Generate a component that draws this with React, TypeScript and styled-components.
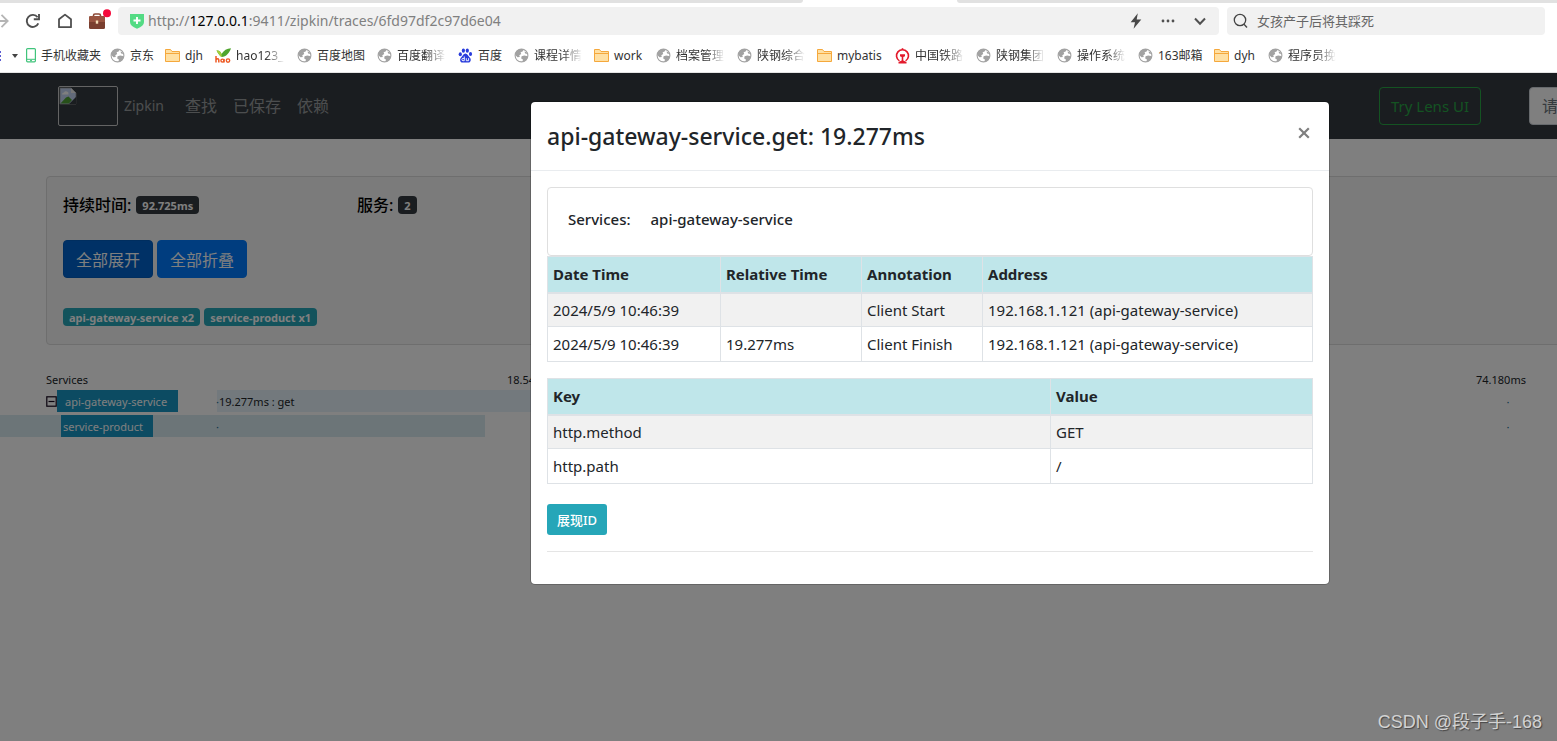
import React from "react";
import styled, { createGlobalStyle, css } from "styled-components";

const latin = `"Noto Sans", "Noto Sans CJK SC", sans-serif`;

const GlobalStyle = createGlobalStyle`
  *, *::before, *::after { box-sizing: border-box; }
  body {
    margin: 0;
    font-family: ${latin};
    font-size: 15px;
    line-height: 24px;
    color: #212529;
    background: #fff;
  }
  button, input { font-family: inherit; }
`;

/* ---------- browser frame ---------- */

const Shell = styled.div`
  display: flex;
  flex-direction: column;
  min-height: 100vh;
  overflow: hidden;
`;

const Browser = styled.header`
  background: #fff;
  border-bottom: 1px solid #e4e4e4;
`;

const TabStrip = styled.div`
  display: flex;
  height: 3px;
  gap: 154px;
`;

const TabEdge = styled.span<{ $grow?: boolean }>`
  width: 803px;
  background: #e1e1e1;
  border-radius: 0 0 3px 0;
  ${(p) =>
    p.$grow &&
    css`
      width: auto;
      flex: 1;
      border-radius: 0 0 0 3px;
    `}
`;

const AddressRow = styled.div`
  display: flex;
  align-items: center;
  padding: 4px 12px 0 0;
`;

const NavTools = styled.div`
  display: flex;
  align-items: center;
  width: 118px;
  height: 28px;
  flex: none;
  gap: 16px;
  overflow: hidden;
`;

const ToolButton = styled.button`
  display: flex;
  flex: none;
  padding: 0;
  border: 0;
  background: none;
  color: #505050;
`;

const ForwardButton = styled(ToolButton)`
  margin-left: -7px;
`;

const Address = styled.div`
  display: flex;
  align-items: center;
  flex: 1;
  height: 28px;
  padding: 0 11px 0 12px;
  border-radius: 4px;
  background: #f1f1f1;
`;

const Url = styled.span`
  flex: 1;
  margin-left: 4px;
  font-size: 14px;
  color: #808080;
  b {
    font-weight: 400;
    color: #000;
  }
`;

const AddressTools = styled.div`
  display: flex;
  align-items: center;
  gap: 16px;
`;

const SearchBox = styled.label`
  display: flex;
  align-items: center;
  gap: 8px;
  width: 318px;
  height: 28px;
  margin-left: 8px;
  padding: 0 6px;
  border-radius: 4px;
  background: #f1f1f1;
`;

const SearchInput = styled.input`
  flex: 1;
  min-width: 0;
  padding: 0;
  border: 0;
  outline: 0;
  background: none;
  font-size: 13px;
  &::placeholder {
    color: #666;
    opacity: 1;
  }
`;

const Bookmarks = styled.nav`
  display: flex;
  align-items: center;
  gap: 12px;
  height: 37px;
  padding-bottom: 2px;
  padding-top: 6px;
  font-size: 12px;
  line-height: 20px;
`;

const BookmarkLead = styled.div`
  display: flex;
  align-items: center;
  gap: 11px;
  width: 18px;
  margin-right: -4px;
`;

const LeadEdge = styled.span`
  width: 1px;
  height: 10px;
  background: repeating-linear-gradient(#5b5bd0 0 2px, #fff 2px 4px);
`;

const Bookmark = styled.a`
  display: flex;
  align-items: center;
  flex: none;
  gap: 5px;
  color: #333;
  text-decoration: none;
`;

const BookmarkText = styled.span<{ $width: number; $fade?: boolean }>`
  width: ${(p) => p.$width}px;
  white-space: nowrap;
  ${(p) =>
    p.$fade &&
    css`
      overflow: hidden;
      mask-image: linear-gradient(to right, #000 60%, transparent);
    `}
`;

/* ---------- page ---------- */

const Page = styled.main`
  position: relative;
  flex: 1;
  overflow: hidden;
  background: #fff;
`;

const Canvas = styled.div`
  width: calc(100% + 303px);
`;

const Navbar = styled.nav`
  display: flex;
  align-items: center;
  height: 66px;
  padding: 0 16px 0 58px;
  background: #343a40;
  font-size: 15px;
`;

const Brand = styled.a`
  display: flex;
  align-items: center;
  gap: 6px;
  width: 127px;
  color: rgba(255, 255, 255, 0.5);
  text-decoration: none;
  font-size: 14px;
`;

const NavLinks = styled.div`
  display: flex;
  flex: 1;
  gap: 16px;
  font-size: 16px;
  a {
    color: rgba(255, 255, 255, 0.5);
    text-decoration: none;
  }
`;

const LensButton = styled.button`
  width: 102px;
  height: 38px;
  padding: 0;
  border: 1px solid #28a745;
  border-radius: 4px;
  background: none;
  color: #28a745;
  font-size: 15px;
`;

const TraceInput = styled.input`
  width: 315px;
  height: 38px;
  margin-left: 48px;
  padding: 0 12px;
  border: 1px solid #ced4da;
  border-radius: 4px;
  font-size: 16px;
  &::placeholder {
    color: #6c757d;
    opacity: 1;
  }
`;

const Summary = styled.section`
  margin: 37px 28px 0 46px;
  height: 169px;
  padding: 16px;
  border: 1px solid #dcdcdc;
  border-radius: 4px;
  background: #f7f7f7;
`;

const Facts = styled.div`
  display: flex;
  font-size: 16px;
  font-weight: 500;
  color: #000;
`;

const Fact = styled.div`
  display: flex;
  align-items: center;
  gap: 5px;
  width: 294px;
`;

const Badge = styled.span<{ $tone: "dark" | "info" }>`
  height: 18px;
  padding: 0 6px;
  border-radius: 4px;
  background: ${(p) => (p.$tone === "dark" ? "#343a40" : "#26a6b8")};
  color: #fff;
  font-size: 11px;
  font-weight: 700;
  line-height: 19px;
  white-space: nowrap;
`;

const ButtonPair = styled.div`
  display: flex;
  gap: 4px;
  margin: 23px 0 30px;
`;

const PrimaryButton = styled.button<{ $active?: boolean }>`
  width: 90px;
  height: 38px;
  padding: 0;
  border: 1px solid ${(p) => (p.$active ? "#005cbf" : "#007bff")};
  border-radius: 4px;
  background: ${(p) => (p.$active ? "#0062cc" : "#007bff")};
  color: #fff;
  font-size: 16px;
`;

const BadgeRow = styled.div`
  display: flex;
  gap: 4px;
`;

const Timeline = styled.section`
  margin-top: 25px;
  font-size: 11px;
  line-height: 24px;
`;

const TickRow = styled.div`
  display: flex;
  height: 20px;
  padding: 0 61px 0 46px;
  line-height: 20px;
`;

const TickTitle = styled.span`
  width: 138px;
`;

const Ticks = styled.div`
  display: grid;
  flex: 1;
  grid-template-columns: repeat(5, 1fr);
`;

const SpanRow = styled.div`
  position: relative;
  display: flex;
  height: 22px;
  margin-bottom: 3px;
  padding: 0 31px 0 46px;
`;

const SpanBar = styled.span`
  position: absolute;
  top: 0;
  bottom: 0;
`;

const SpanName = styled.div`
  position: relative;
  display: flex;
  align-items: center;
  width: 170px;
`;

const Toggle = styled.button`
  display: flex;
  padding: 0;
  border: 0;
  background: none;
`;

const SpanLabel = styled.span<{ $child?: boolean }>`
  height: 22px;
  padding: 0 11px 0 8px;
  background: #1896c4;
  color: #fff;
  ${(p) =>
    p.$child &&
    css`
      margin-left: 15px;
      padding: 0 10px 0 2px;
    `}
`;

const SpanTrack = styled.div`
  position: relative;
  display: grid;
  flex: 1;
  grid-template-columns: repeat(5, 1fr);
  white-space: nowrap;
`;

const Dot = styled.span`
  color: #1f6f96;
`;

/* ---------- modal ---------- */

const Backdrop = styled.div`
  position: absolute;
  inset: 0;
  background: rgba(0, 0, 0, 0.5);
`;

const DialogLayer = styled.div`
  position: absolute;
  top: 28px;
  left: 0;
  width: calc(100% + 303px);
  display: flex;
  justify-content: center;
`;

const Dialog = styled.div`
  width: 800px;
  border: 1px solid rgba(0, 0, 0, 0.2);
  border-radius: 5px;
  background: #fff;
  background-clip: padding-box;
`;

const DialogHeader = styled.div`
  display: flex;
  justify-content: space-between;
  padding: 16px;
  border-bottom: 1px solid #e9ecef;
`;

const DialogTitle = styled.h5`
  margin: 0;
  font-size: 23px;
  font-weight: 500;
  line-height: 36px;
`;

const CloseButton = styled.button`
  display: flex;
  align-items: center;
  justify-content: center;
  width: 18px;
  height: 30px;
  padding: 0;
  border: 0;
  background: none;
`;

const DialogBody = styled.div`
  padding: 16px;
`;

const ServiceCard = styled.div`
  display: flex;
  gap: 20px;
  height: 69px;
  padding: 19px 20px;
  border: 1px solid #dfdfdf;
  border-radius: 4px;
  font-size: 15px;
  font-weight: 500;
`;

const DataTable = styled.table`
  width: 100%;
  margin-bottom: 16px;
  border-collapse: collapse;
  table-layout: fixed;
  border: 1px solid #dee2e6;
  font-size: 15px;
  th,
  td {
    height: 35px;
    padding: 0 5px;
    border: 1px solid #dee2e6;
    text-align: left;
  }
  td {
    height: 34px;
  }
  th {
    height: 36px;
    border-bottom-width: 2px;
    background: #bfe6ea;
    font-weight: 700;
  }
  tbody tr:nth-child(odd) {
    background: #f1f1f1;
  }
  tbody tr:last-child td {
    height: 35px;
  }
`;

const InfoButton = styled.button`
  display: block;
  width: 60px;
  height: 31px;
  margin-top: 20px;
  padding: 0;
  border: 0;
  border-radius: 3px;
  background: #26a6b8;
  color: #fff;
  font-size: 13px;
  font-weight: 500;
`;

const Rule = styled.hr`
  margin: 16px 0;
  border: 0;
  border-top: 1px solid #e5e5e5;
`;

const Watermark = styled.div`
  position: absolute;
  right: 15px;
  bottom: 7px;
  font-family: "Liberation Sans", "Noto Sans CJK SC", sans-serif;
  font-size: 18px;
  color: #d2d2d2;
  text-shadow: 1px 1px 1px #444;
`;

/* ---------- icons ---------- */

const GlobeIcon = () => (
  <svg width="15" height="15" viewBox="0 0 15 15">
    <circle cx="7.5" cy="7.5" r="6.4" fill="#fff" stroke="#a2a2a2" strokeWidth="1.1" />
    <path d="M1.2 7C1.3 3.600 4 1 7.400 1L9.500 1.400 8.600 3.600 6.600 4.300 7.200 6 5.300 7.300 5.800 9 3.500 9.200Z" fill="#a2a2a2" />
    <path d="M7.600 8.200 10.300 7.400 13.900 8.200C13.600 11.200 11.400 13.500 8.500 13.900L8.900 11.600 7.200 10.400Z" fill="#a2a2a2" />
    <path d="M10.500 3.500 12.300 4 13.300 6 11.200 5.400Z" fill="#a2a2a2" />
  </svg>
);

const FolderIcon = () => (
  <svg width="15" height="15" viewBox="0 0 15 15">
    <path d="M.5 13.500V1.500H5.500L7 3.500H14.500V13.500Z" fill="#ffe0a3" stroke="#f5a83c" />
    <path d="M.5 5.500H14.500" stroke="#f5a83c" />
  </svg>
);

const PhoneIcon = () => (
  <svg width="10" height="15" viewBox="0 0 10 15">
    <rect x=".6" y=".6" width="8.800" height="13.200" rx="1" fill="#fff" stroke="#40c47b" strokeWidth="1.200" />
    <path d="M1 11.300H9M4 12.600H6" stroke="#40c47b" />
  </svg>
);

const HaoIcon = () => (
  <svg width="16" height="15" viewBox="0 0 16 15">
    <path d="M1.500 2.500C4 2 6 4 6.500 6 8.500 2.500 12 .3 16 .2 14.500 5 11 8.700 6.800 8.900 5 8.500 3.500 6 1.500 2.500Z" fill="#4ea52e" />
    <path d="M1.500 2.500C4 2 6 4 6.500 6L6.800 8.900C5 8.500 3.500 6 1.500 2.500Z" fill="#a5cf3b" />
    <path d="M1 8V14.500M1 11.700Q3.400 9.800 3.800 12V14.500M9 11V14.500" fill="none" stroke="#ee5a24" strokeWidth="1.500" />
    <circle cx="7.400" cy="12.600" r="1.500" fill="none" stroke="#ee5a24" strokeWidth="1.400" />
    <circle cx="13" cy="12.600" r="1.700" fill="none" stroke="#ee5a24" strokeWidth="1.400" />
  </svg>
);

const PawIcon = () => (
  <svg width="15" height="15" viewBox="0 0 15 15" fill="#2a3ddc">
    <ellipse cx="2.300" cy="6.200" rx="1.600" ry="2" />
    <ellipse cx="5.400" cy="2.600" rx="1.600" ry="2.200" />
    <ellipse cx="9.300" cy="2.600" rx="1.600" ry="2.200" />
    <ellipse cx="12.500" cy="6" rx="1.600" ry="2" />
    <path d="M7.400 5.600C9.400 5.600 10 8 11.500 9.200 13.600 11 13 14.500 10.300 14.500H4.500C1.800 14.500 1.400 11 3.400 9.200 4.900 8 5.400 5.600 7.400 5.600Z" />
    <path d="M6.300 8.500V12.700H5Q3.800 12.700 3.900 11.500T5 10.400H6.300M8.300 10.200V12.700H10.600V10.200" fill="none" stroke="#fff" strokeWidth=".9" />
  </svg>
);

const RailIcon = () => (
  <svg width="15" height="16" viewBox="0 0 15 16">
    <path d="M4.400 12.900A6 6 0 1 1 10.600 12.900" fill="none" stroke="#e3192b" strokeWidth="1.600" />
    <path d="M5 6.200H10V8.200L8.300 9V12.500L11.500 14V15.500H3.500V14L6.700 12.500V9L5 8.200Z" fill="#e3192b" />
    <path d="M6.700 .2H8.300V2H6.700Z" fill="#e3192b" />
  </svg>
);

const ForwardIcon = () => (
  <svg width="16" height="16" viewBox="0 0 16 16" fill="none" stroke="#b5b5b5" strokeWidth="1.800">
    <path d="M0 8H14.500M8.500 1.800 14.700 8 8.500 14.200" />
  </svg>
);

const ReloadIcon = () => (
  <svg width="16" height="16" viewBox="0 0 16 16" fill="none" stroke="#505050" strokeWidth="1.900">
    <path d="M13.300 10.300A6 6 0 1 1 12.600 4.300" />
    <path d="M14 1V6.200H8.800" />
  </svg>
);

const HomeIcon = () => (
  <svg width="16" height="16" viewBox="0 0 16 16" fill="none" stroke="#505050" strokeWidth="1.800" strokeLinejoin="round">
    <path d="M2 6.300 8 1.600 14 6.300V14.200H2Z" />
  </svg>
);

const BriefcaseIcon = () => (
  <svg width="24" height="24" viewBox="0 0 24 24">
    <path d="M4.500 8V6.500Q4.500 5 6 5H10Q11.500 5 11.500 6.500V8" fill="none" stroke="#8d4a37" strokeWidth="1.600" />
    <rect x="0" y="7" width="16" height="13" rx="1.500" fill="#7a3f2f" />
    <path d="M0 8.500Q0 7 1.500 7H14.500Q16 7 16 8.500V13H0Z" fill="#985440" />
    <rect x="6.800" y="11.500" width="2.400" height="3.200" fill="#f4dfb8" />
    <circle cx="18" cy="4.200" r="4" fill="#f5093a" />
  </svg>
);

const ShieldIcon = () => (
  <svg width="14" height="16" viewBox="0 0 14 16">
    <path d="M0 1H14V9Q14 13 7 15.800 0 13 0 9Z" fill="#54db84" />
    <path d="M7 4V11M3.500 7.500H10.500" stroke="#fff" strokeWidth="1.900" />
  </svg>
);

const BoltIcon = () => (
  <svg width="16" height="16" viewBox="0 0 16 16" fill="#484848">
    <path d="M9.800 .3 2.700 9.200H7L5.600 15.700 13.300 6.400H8.700Z" />
  </svg>
);

const DotsIcon = () => (
  <svg width="16" height="16" viewBox="0 0 16 16" fill="#505050">
    <circle cx="3" cy="8" r="1.400" />
    <circle cx="8" cy="8" r="1.400" />
    <circle cx="13" cy="8" r="1.400" />
  </svg>
);

const ChevronIcon = () => (
  <svg width="16" height="16" viewBox="0 0 16 16" fill="none" stroke="#505050" strokeWidth="2">
    <path d="M3 5.500 8 10.700 13 5.500" />
  </svg>
);

const SearchIcon = () => (
  <svg width="16" height="16" viewBox="0 0 16 16" fill="none" stroke="#444" strokeWidth="1.300">
    <circle cx="7" cy="7" r="5.700" />
    <path d="M11 11.200 14 14.500" />
  </svg>
);

const CaretIcon = () => (
  <svg width="6" height="4" viewBox="0 0 6 4">
    <path d="M0 0H6L3 4Z" fill="#444" />
  </svg>
);

const BrokenImage = () => (
  <svg width="60" height="40" viewBox="0 0 60 40" role="img" aria-label="Zipkin logo">
    <rect x=".5" y=".5" width="59" height="39" rx="1.500" fill="none" stroke="#c8c8c8" />
    <path d="M2 2H13L18 7V18H2Z" fill="#c4d5f4" stroke="#999" strokeWidth=".8" />
    <path d="M4 8.500Q4 6.500 6 6.500 7 4.500 9 5.500 11 6 10.500 8.500Z" fill="#fff" />
    <path d="M2.400 17.600 8 11.500 10.500 10.500 14 14 11 17.600Z" fill="#4fa135" />
    <path d="M11 18 18.500 10.500V18Z" fill="#343a40" />
    <path d="M13 2V7H18Z" fill="#eee" />
  </svg>
);

const MinusBox = () => (
  <svg width="11" height="11" viewBox="0 0 11 11" fill="none" stroke="#14061c" strokeWidth="1.200">
    <rect x=".8" y=".8" width="9.400" height="9.400" />
    <path d="M2.500 5.500H8.500" />
  </svg>
);

const CloseIcon = () => (
  <svg width="12" height="12" viewBox="0 0 12 12" stroke="#7f7f7f" strokeWidth="2.200">
    <path d="M1.200 1.200 10.800 10.800M10.800 1.200 1.200 10.800" />
  </svg>
);

/* ---------- data ---------- */

const bookmarks: { icon: React.FC; text: string; width: number; fade?: boolean }[] = [
  { icon: PhoneIcon, text: "手机收藏夹", width: 57 },
  { icon: GlobeIcon, text: "京东", width: 23 },
  { icon: FolderIcon, text: "djh", width: 18 },
  { icon: HaoIcon, text: "hao123_", width: 49, fade: true },
  { icon: GlobeIcon, text: "百度地图", width: 48 },
  { icon: GlobeIcon, text: "百度翻译", width: 49, fade: true },
  { icon: PawIcon, text: "百度", width: 24 },
  { icon: GlobeIcon, text: "课程详情", width: 48, fade: true },
  { icon: FolderIcon, text: "work", width: 30 },
  { icon: GlobeIcon, text: "档案管理", width: 49, fade: true },
  { icon: GlobeIcon, text: "陕钢综合", width: 48, fade: true },
  { icon: FolderIcon, text: "mybatis", width: 46 },
  { icon: RailIcon, text: "中国铁路", width: 49, fade: true },
  { icon: GlobeIcon, text: "陕钢集团", width: 49, fade: true },
  { icon: GlobeIcon, text: "操作系统", width: 49, fade: true },
  { icon: GlobeIcon, text: "163邮箱", width: 44 },
  { icon: FolderIcon, text: "dyh", width: 22 },
  { icon: GlobeIcon, text: "程序员挽", width: 48, fade: true },
];

const annotations = [
  ["2024/5/9 10:46:39", "", "Client Start", "192.168.1.121 (api-gateway-service)"],
  ["2024/5/9 10:46:39", "19.277ms", "Client Finish", "192.168.1.121 (api-gateway-service)"],
];

const tags = [
  ["http.method", "GET"],
  ["http.path", "/"],
];

const tickLabels = ["", "18.545ms", "37.090ms", "55.635ms", "74.180ms"];

function TickDots({ text }: { text?: string }) {
  return (
    <SpanTrack>
      {tickLabels.map((label, i) => (
        <span key={label}>
          <Dot>·</Dot>
          {i === 0 && text}
        </span>
      ))}
    </SpanTrack>
  );
}

export default function App() {
  return (
    <Shell>
      <GlobalStyle />
      <Browser>
        <TabStrip>
          <TabEdge />
          <TabEdge $grow />
        </TabStrip>
        <AddressRow>
          <NavTools>
            <ForwardButton aria-label="前进"><ForwardIcon /></ForwardButton>
            <ToolButton aria-label="刷新"><ReloadIcon /></ToolButton>
            <ToolButton aria-label="主页"><HomeIcon /></ToolButton>
            <ToolButton aria-label="工具箱"><BriefcaseIcon /></ToolButton>
          </NavTools>
          <Address>
            <ShieldIcon />
            <Url>
              http://<b>127.0.0.1</b>:9411/zipkin/traces/6fd97df2c97d6e04
            </Url>
            <AddressTools>
              <ToolButton aria-label="极速模式"><BoltIcon /></ToolButton>
              <ToolButton aria-label="更多"><DotsIcon /></ToolButton>
              <ToolButton aria-label="展开"><ChevronIcon /></ToolButton>
            </AddressTools>
          </Address>
          <SearchBox>
            <SearchIcon />
            <SearchInput aria-label="搜索" placeholder="女孩产子后将其踩死" />
          </SearchBox>
        </AddressRow>
        <Bookmarks>
          <BookmarkLead>
            <LeadEdge />
            <CaretIcon />
          </BookmarkLead>
          {bookmarks.map(({ icon: Icon, text, width, fade }) => (
            <Bookmark key={text} href="#">
              <Icon />
              <BookmarkText $width={width} $fade={fade}>{text}</BookmarkText>
            </Bookmark>
          ))}
        </Bookmarks>
      </Browser>

      <Page>
        <Canvas>
          <Navbar>
            <Brand href="#"><BrokenImage />Zipkin</Brand>
            <NavLinks>
              <a href="#">查找</a>
              <a href="#">已保存</a>
              <a href="#">依赖</a>
            </NavLinks>
            <LensButton>Try Lens UI</LensButton>
            <TraceInput aria-label="Trace ID" placeholder="请输入" />
          </Navbar>

          <Summary>
            <Facts>
              <Fact>持续时间: <Badge $tone="dark">92.725ms</Badge></Fact>
              <Fact>服务: <Badge $tone="dark">2</Badge></Fact>
            </Facts>
            <ButtonPair>
              <PrimaryButton $active>全部展开</PrimaryButton>
              <PrimaryButton>全部折叠</PrimaryButton>
            </ButtonPair>
            <BadgeRow>
              <Badge $tone="info">api-gateway-service x2</Badge>
              <Badge $tone="info">service-product x1</Badge>
            </BadgeRow>
          </Summary>

          <Timeline>
            <TickRow>
              <TickTitle>Services</TickTitle>
              <Ticks>
                {tickLabels.map((label) => <span key={label}>{label}</span>)}
              </Ticks>
            </TickRow>
            <SpanRow>
              <SpanBar style={{ left: 217, width: 336, background: "#e6f3fa" }} />
              <SpanName>
                <Toggle aria-label="折叠"><MinusBox /></Toggle>
                <SpanLabel>api-gateway-service</SpanLabel>
              </SpanName>
              <TickDots text="19.277ms : get" />
            </SpanRow>
            <SpanRow>
              <SpanBar style={{ left: 0, width: 485, background: "#d8eaf1" }} />
              <SpanName>
                <SpanLabel $child>service-product</SpanLabel>
              </SpanName>
              <TickDots />
            </SpanRow>
          </Timeline>
        </Canvas>

        <Backdrop />

        <DialogLayer>
          <Dialog role="dialog" aria-label="api-gateway-service.get">
            <DialogHeader>
              <DialogTitle>api-gateway-service.get: 19.277ms</DialogTitle>
              <CloseButton aria-label="关闭"><CloseIcon /></CloseButton>
            </DialogHeader>
            <DialogBody>
              <ServiceCard>
                <span>Services:</span>
                <span>api-gateway-service</span>
              </ServiceCard>
              <DataTable>
                <colgroup>
                  <col width="173" />
                  <col width="141" />
                  <col width="121" />
                  <col />
                </colgroup>
                <thead>
                  <tr>
                    <th>Date Time</th>
                    <th>Relative Time</th>
                    <th>Annotation</th>
                    <th>Address</th>
                  </tr>
                </thead>
                <tbody>
                  {annotations.map((row) => (
                    <tr key={row[2]}>
                      {row.map((cell, i) => <td key={i}>{cell}</td>)}
                    </tr>
                  ))}
                </tbody>
              </DataTable>
              <DataTable>
                <colgroup>
                  <col />
                  <col width="262" />
                </colgroup>
                <thead>
                  <tr>
                    <th>Key</th>
                    <th>Value</th>
                  </tr>
                </thead>
                <tbody>
                  {tags.map(([key, value]) => (
                    <tr key={key}>
                      <td>{key}</td>
                      <td>{value}</td>
                    </tr>
                  ))}
                </tbody>
              </DataTable>
              <InfoButton>展现ID</InfoButton>
              <Rule />
            </DialogBody>
          </Dialog>
        </DialogLayer>

        <Watermark>CSDN @段子手-168</Watermark>
      </Page>
    </Shell>
  );
}
